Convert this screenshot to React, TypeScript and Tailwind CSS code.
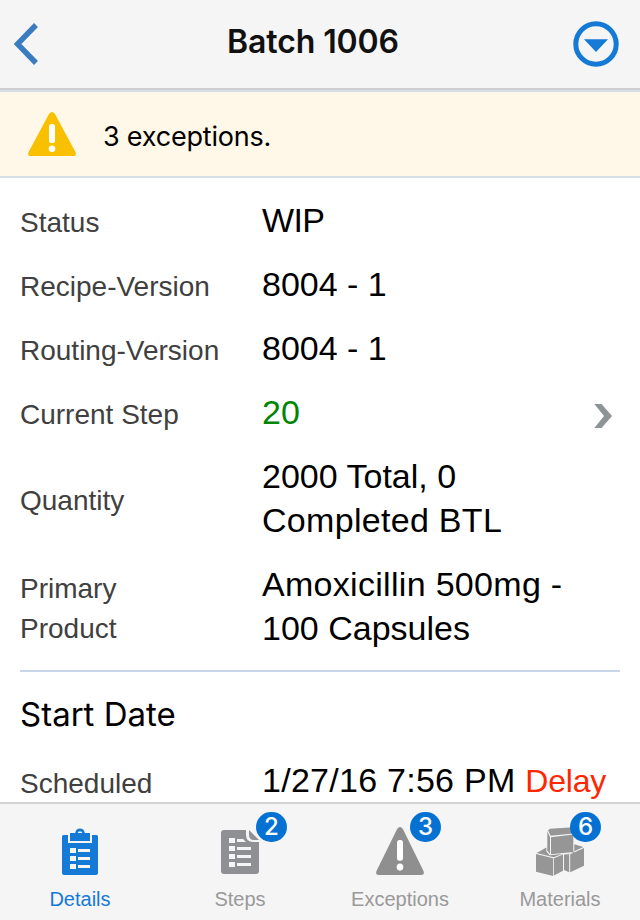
import React from 'react';

type IconProps = { className?: string };

const BackIcon: React.FC<IconProps> = ({ className }) => (
  <svg className={className} width="24" height="42" viewBox="0 0 24 42" fill="none">
    <path d="M22 2L3.500 21L22 40" stroke="#3a7cc0" strokeWidth="5.500" />
  </svg>
);

const MenuIcon: React.FC<IconProps> = ({ className }) => (
  <svg className={className} width="46" height="46" viewBox="0 0 46 46">
    <circle cx="23" cy="23" r="20.200" fill="none" stroke="#147ad6" strokeWidth="5" />
    <path d="M11 18.300H35L23 31Z" fill="#147ad6" />
  </svg>
);

const WarningIcon: React.FC<IconProps> = ({ className }) => (
  <svg className={className} viewBox="0 0 48 44" preserveAspectRatio="none">
    <path
      d="M21 2Q24-2 27 2L47.400 40Q49 44 45 44H3Q-1 44 .6 40Z"
      fill="currentColor"
    />
    <rect x="21" y="12" width="6" height="19" rx="2.500" fill="#fff" />
    <circle cx="24" cy="36.700" r="3.300" fill="#fff" />
  </svg>
);

const ChevronIcon: React.FC<IconProps> = ({ className }) => (
  <svg className={className} width="18" height="24" viewBox="0 0 18 24">
    <path d="M.3 0H7.500L18 12L7.500 24H.3L10 12Z" fill="#8e9396" />
  </svg>
);

const DetailsIcon = () => (
  <svg width="36" height="48" viewBox="0 0 36 48">
    <path d="M0 9.500Q0 8 1.500 8H6V16H30V8H34.500Q36 8 36 9.500V46Q36 48 34 48H2Q0 48 0 46Z" fill="#147ad6" />
    <path d="M8 6H13.200A4.900 5.500 0 0 1 22.800 6H28V14H8ZM15.700 6H20.300A2.400 2.600 0 0 0 15.700 6Z" fill="#147ad6" fillRule="evenodd" />
    <path d="M8 21h6v5h-6zM8 29h6v5h-6zM8 37h6v5h-6zM16 22h12v3h-12zM16 30h12v3h-12zM16 38h12v3h-12z" fill="#f5f5f5" />
  </svg>
);

const StepsIcon = () => (
  <svg className="mt-[2px]" width="38" height="44" viewBox="0 0 38 44">
    <path d="M3 0H25V5Q25 12 32 12H38V41Q38 44 35 44H3Q0 44 0 41V3Q0 0 3 0Z" fill="#8e9094" />
    <path d="M28 0L38 10H33Q28 10 28 5Z" fill="#8e9094" />
    <path d="M8 8h6v5h-6zM8 16h6v5h-6zM8 24h6v5h-6zM8 32h6v5h-6zM16 9h6l3 3h-9zM16 17h14v3h-14zM16 25h14v3h-14zM16 33h14v3h-14z" fill="#f5f5f5" />
  </svg>
);

const MaterialsIcon = () => (
  <svg width="48" height="50" viewBox="0 0 48 50" fill="#969696">
    {/* top box */}
    <path d="M14 2.700L37.300 1.300V7.500L14.700 9.800L12 4.300Z" />
    <path d="M11.300 5.200L14 11V28L11.300 24.500Z" />
    <path d="M15 11.200L37.300 8.600V26L15 28.300Z" />
    {/* left box */}
    <path d="M.6 27L10.400 21.500V25.500L13.700 29.300L26.500 28L17.600 31.300Z" />
    <path d="M0 28L17.200 32.300V50L0 45.700Z" />
    <path d="M18 32.300L27 28.500V44.700L18 49.600Z" />
    {/* right box */}
    <path d="M38.300 18.300L47.400 21L34 27.300L29 27.600L38.300 26.600Z" />
    <path d="M28 28.400L33.200 28.300V46.300L28 44Z" />
    <path d="M34.200 28.200L48 22V39.700L34.200 46.300Z" />
  </svg>
);

interface RowProps {
  label: string;
  children: React.ReactNode;
  chevron?: boolean;
}

const Row: React.FC<RowProps> = ({ label, children, chevron }) => (
  <div className="flex items-center py-[10px] pl-5 pr-7">
    <div className="w-[242px] shrink-0 pt-[5px] text-[28px] leading-10 text-[#404040] whitespace-pre-line -mb-px">
      {label}
    </div>
    <div className="flex-1 text-[34px] leading-[44px] text-black whitespace-pre">{children}</div>
    {chevron && <ChevronIcon className="mt-2" />}
  </div>
);

interface TabProps {
  label: string;
  icon: React.ReactNode;
  badge?: number;
  badgeClass?: string;
  active?: boolean;
}

const Tab: React.FC<TabProps> = ({ label, icon, badge, badgeClass = '', active }) => (
  <button className="relative flex flex-1 flex-col items-center pt-[22px]">
    <span className="flex h-[50px] items-center justify-center">{icon}</span>
    <span className={`mt-[11px] text-xl leading-6 ${active ? 'text-[#147ad6]' : 'text-[#999999]'}`}>{label}</span>
    {badge !== undefined && (
      <span
        className={`absolute top-2 flex h-[30px] w-[31px] items-center justify-center rounded-full bg-[#0572d3] font-['Inter'] text-2xl font-medium text-white ${badgeClass}`}
      >
        {badge}
      </span>
    )}
  </button>
);

export default function App() {
  return (
    <div className="flex h-[920px] w-[640px] flex-col overflow-hidden bg-white font-['Liberation_Sans',Arial,sans-serif]">
      {/* Header */}
      <header className="flex h-[90px] shrink-0 items-center justify-between border-b-2 border-[#cfcfd2] bg-[#f5f5f5] pl-[14px] pr-[21px]">
        <BackIcon />
        <h1 className="-mt-1 pl-[15px] font-['Inter',sans-serif] text-[32px] font-semibold tracking-[-0.1px] text-[#111]">Batch 1006</h1>
        <MenuIcon />
      </header>

      {/* Exceptions banner */}
      <div className="flex h-[88px] shrink-0 items-center border-y-2 border-[#d5dfe6] bg-[#fff8e8] pl-7">
        <WarningIcon className="h-[44px] w-12 text-[#f9c000]" />
        <span className="ml-[27px] pt-[6px] font-['Inter',sans-serif] text-[27px] tracking-[-0.2px] text-black">3 exceptions.</span>
      </div>

      {/* Batch details */}
      <main className="min-h-0 flex-1 overflow-hidden pt-[10px]">
        <Row label="Status">
          <span className="tracking-[-0.6px]">WIP</span>
        </Row>
        <Row label="Recipe-Version">8004 - 1</Row>
        <Row label="Routing-Version">8004 - 1</Row>
        <Row label="Current Step" chevron>
          <span className="text-[#008500]">20</span>
        </Row>
        <Row label="Quantity">
          2000 Total, 0{'\n'}
          <span className="tracking-[0.3px]">Completed BTL</span>
        </Row>
        <Row label={'Primary\nProduct'}>
          <span className="tracking-[0.3px]">Amoxicillin 500mg -</span>
          {'\n'}100 Capsules
        </Row>

        <div className="mx-5 mt-[10px] h-[2px] bg-[#c8d7e8]" />

        <h2 className="mt-5 pl-5 font-['Inter',sans-serif] text-[33px] leading-[44px] text-black">Start Date</h2>
        <div className="mt-3">
          <Row label="Scheduled">
            <span className="tracking-[0.27px]">1/27/16 7:56 PM </span>
            <span className="text-[32px] tracking-[-0.2px] text-[#ff2600]">Delay</span>
          </Row>
        </div>
      </main>

      {/* Tab bar */}
      <nav className="flex h-[118px] shrink-0 border-t-2 border-[#d2d2d3] bg-[#f5f5f5]">
        <Tab label="Details" icon={<DetailsIcon />} active />
        <Tab label="Steps" icon={<StepsIcon />} badge={2} badgeClass="left-24" />
        <Tab
          label="Exceptions"
          icon={<WarningIcon className="h-12 w-12 text-[#8f8f8f]" />}
          badge={3}
          badgeClass="left-[90px]"
        />
        <Tab label="Materials" icon={<MaterialsIcon />} badge={6} badgeClass="left-[90px]" />
      </nav>
    </div>
  );
}
